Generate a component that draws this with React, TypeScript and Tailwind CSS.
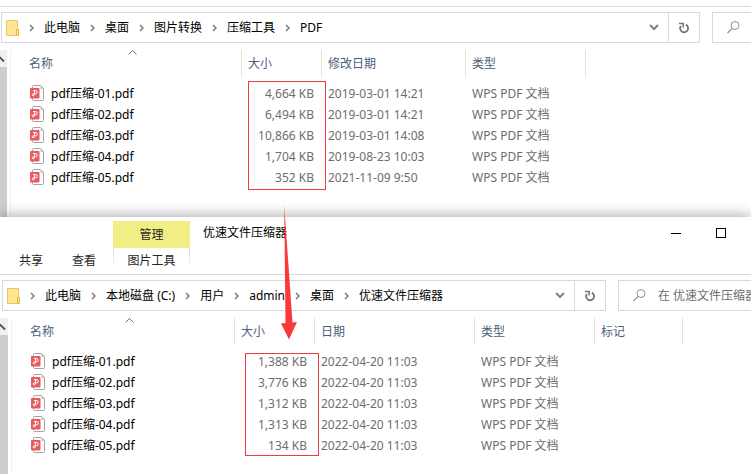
import { clsx } from "clsx";

type Column = { label: string; width: string };
type FileRow = { name: string; size: string; date: string };

const SOURCE_COLUMNS: Column[] = [
  { label: "名称", width: "w-[219px]" },
  { label: "大小", width: "w-[80px]" },
  { label: "修改日期", width: "w-[144px]" },
  { label: "类型", width: "w-[120px]" },
];

const OUTPUT_COLUMNS: Column[] = [
  { label: "名称", width: "w-[211px]" },
  { label: "大小", width: "w-[80px]" },
  { label: "日期", width: "w-[160px]" },
  { label: "类型", width: "w-[120px]" },
  { label: "标记", width: "w-[88px]" },
];

const SOURCE_FILES: FileRow[] = [
  { name: "pdf压缩-01.pdf", size: "4,664 KB", date: "2019-03-01 14:21" },
  { name: "pdf压缩-02.pdf", size: "6,494 KB", date: "2019-03-01 14:21" },
  { name: "pdf压缩-03.pdf", size: "10,866 KB", date: "2019-03-01 14:08" },
  { name: "pdf压缩-04.pdf", size: "1,704 KB", date: "2019-08-23 10:03" },
  { name: "pdf压缩-05.pdf", size: "352 KB", date: "2021-11-09 9:50" },
];

const OUTPUT_FILES: FileRow[] = [
  { name: "pdf压缩-01.pdf", size: "1,388 KB", date: "2022-04-20 11:03" },
  { name: "pdf压缩-02.pdf", size: "3,776 KB", date: "2022-04-20 11:03" },
  { name: "pdf压缩-03.pdf", size: "1,312 KB", date: "2022-04-20 11:03" },
  { name: "pdf压缩-04.pdf", size: "1,313 KB", date: "2022-04-20 11:03" },
  { name: "pdf压缩-05.pdf", size: "134 KB", date: "2022-04-20 11:03" },
];

function FolderIcon() {
  return (
    <svg width="13" height="16" viewBox="0 0 13 16" className="shrink-0">
      <path d="M.5.5h11v15H.5z" fill="#ffe594" stroke="#ecc85c" />
      <path d="M10.5 9.5h2v6h-2z" fill="#ffe594" stroke="#e9b93a" />
    </svg>
  );
}

function CrumbArrow() {
  return (
    <svg width="5" height="8" viewBox="0 0 5 8" className="shrink-0">
      <path d="M1 1l3 3-3 3" fill="none" stroke="#7a7a7a" strokeWidth="1.5" />
    </svg>
  );
}

function PdfIcon() {
  return (
    <svg width="16" height="17" viewBox="0 0 16 17" className="shrink-0">
      <path
        d="M4.5.5h7l3 3v11a1 1 0 0 1-1 1h-9a1 1 0 0 1-1-1v-13a1 1 0 0 1 1-1z"
        fill="#fff"
        stroke="#a3a3a3"
      />
      <path d="M11.5 1l3 3h-3z" fill="#c4c4c4" />
      <rect x="1" y="3" width="9.5" height="10.5" rx="1" fill="#ea5a5e" />
      <path
        d="M4 5.5h2.500a1.700 1.700 0 0 1 0 3.400H4.200a1 1 0 1 0 1 1.100l.6-4.500"
        fill="none"
        stroke="#fff"
      />
    </svg>
  );
}

function RefreshIcon() {
  return (
    <svg width="12" height="12" viewBox="0 0 12 12">
      <path d="M7.8 2.6a4 4 0 1 1-5 1.400" fill="none" stroke="#757575" strokeWidth="1.8" />
      <path d="M1 1.500h4.200v4" fill="none" stroke="#757575" strokeWidth="1.5" />
    </svg>
  );
}

function SearchIcon() {
  return (
    <svg width="13" height="13" viewBox="0 0 13 13" className="shrink-0">
      <circle cx="8" cy="4.5" r="4" fill="none" stroke="#8f8f8f" />
      <path d="M5.2 7.3L.5 12" stroke="#8f8f8f" strokeWidth="1.2" />
    </svg>
  );
}

function AddressRow({
  crumbs,
  search,
  searchWidth,
}: {
  crumbs: string[];
  search: string;
  searchWidth: string;
}) {
  return (
    <div className="mt-[5px] flex h-[31px] gap-3 pl-0.5">
      <div className="flex min-w-0 flex-1 border border-[#d9d9d9]">
        <nav className="flex min-w-0 flex-1 items-center gap-2.5 pl-1">
          <FolderIcon />
          {crumbs.map((crumb) => (
            <span key={crumb} className="flex items-center gap-2.5">
              <CrumbArrow />
              <button className="whitespace-nowrap">{crumb}</button>
            </span>
          ))}
        </nav>
        <button aria-label="历史记录" className="grid w-7 place-items-center">
          <svg width="10" height="7" viewBox="0 0 10 7">
            <path d="M1 1l4 4 4-4" fill="none" stroke="#808080" strokeWidth="2" />
          </svg>
        </button>
        <button
          aria-label="刷新"
          className="grid w-[31px] place-items-center border-l border-[#d9d9d9]"
        >
          <RefreshIcon />
        </button>
      </div>
      <label
        className={clsx(
          "flex shrink-0 items-center gap-3 overflow-hidden border border-r-0 border-[#d9d9d9] pl-3.5",
          searchWidth,
        )}
      >
        <SearchIcon />
        <input
          aria-label="搜索"
          placeholder={search}
          className="w-full min-w-0 outline-none placeholder:text-[#6d6d6d]"
        />
      </label>
    </div>
  );
}

function ScrollBar() {
  return (
    <div className="flex w-2 shrink-0 flex-col bg-[#cdcdcd]">
      <button aria-label="向上滚动" className="h-[17px] bg-[#f0f0f0]">
        <svg width="8" height="17" viewBox="0 0 8 17">
          <path d="M-4 11.5L.5 7 5 11.5" fill="none" stroke="#505050" strokeWidth="1.8" />
        </svg>
      </button>
    </div>
  );
}

function FileTable({ columns, files }: { columns: Column[]; files: FileRow[] }) {
  return (
    <table className="table-fixed border-collapse self-start">
      <thead>
        <tr className="h-[33px] align-top text-[#4c607a]">
          {columns.map((column, index) => (
            <th key={column.label} className={clsx("p-0 text-left font-normal", column.width)}>
              <div className="relative flex h-[27px] items-center border-r border-[#e2e2e2] pl-1.5">
                {column.label}
                {index === 0 && (
                  <svg
                    width="9"
                    height="5"
                    viewBox="0 0 9 5"
                    className="absolute inset-x-0 top-0 mx-auto"
                  >
                    <path d="M.5 4.5l4-4 4 4" fill="none" stroke="#6d6d6d" />
                  </svg>
                )}
              </div>
            </th>
          ))}
        </tr>
      </thead>
      <tbody className="text-[#6d6d6d]">
        {files.map((file) => (
          <tr key={file.name} className="h-[21px]">
            <td className="p-0 pl-1.5 text-black">
              <div className="flex items-center gap-1.5">
                <PdfIcon />
                {file.name}
              </div>
            </td>
            <td className="p-0 pr-2 text-right">{file.size}</td>
            <td className="p-0 pl-1.5">{file.date}</td>
            <td className="p-0 pl-1.5">WPS PDF 文档</td>
          </tr>
        ))}
      </tbody>
    </table>
  );
}

function FilePane({ columns, files }: { columns: Column[]; files: FileRow[] }) {
  return (
    <div className="mt-[7px] flex flex-1">
      <ScrollBar />
      <div className="ml-[3px] flex border-l border-[#f0f0f0] pl-3">
        <FileTable columns={columns} files={files} />
      </div>
    </div>
  );
}

function Ribbon() {
  return (
    <header className="flex h-[58px] border-b border-[#d9d9d9]">
      <button className="mt-[31px] h-[26px] w-[62px] text-[#262626]">共享</button>
      <button className="mt-[31px] h-[26px] w-11 text-[#262626]">查看</button>
      <div className="ml-[7px] mt-1 w-[77px] text-[#262626]">
        <div className="grid h-[27px] place-items-center bg-[#f0ee84]">管理</div>
        <div className="flex">
          <span className="h-[22px] w-px bg-gradient-to-b from-gray-300 to-transparent" />
          <button className="h-[26px] flex-1">图片工具</button>
          <span className="h-[22px] w-px bg-gradient-to-b from-gray-300 to-transparent" />
        </div>
      </div>
      <h1 className="ml-[13px] flex h-8 items-center">优速文件压缩器</h1>
      <div className="ml-auto flex h-[31px] items-center gap-[35px] pr-[25px]">
        <button aria-label="最小化">
          <svg width="10" height="10" viewBox="0 0 10 10" className="block">
            <path d="M0 5.5h10" stroke="#000" />
          </svg>
        </button>
        <button aria-label="最大化" className="size-2.5 border border-black" />
      </div>
    </header>
  );
}

export default function App() {
  return (
    <div className="relative flex min-h-screen flex-col overflow-hidden bg-white font-['Noto_Sans','Noto_Sans_CJK_SC',sans-serif] text-xs text-black">
      <section className="relative -ml-px flex min-h-[217px] flex-col">
        <div className="h-[7px] border-b border-[#d9d9d9]" />
        <AddressRow
          crumbs={["此电脑", "桌面", "图片转换", "压缩工具", "PDF"]}
          search=""
          searchWidth="w-[39px]"
        />
        <FilePane columns={SOURCE_COLUMNS} files={SOURCE_FILES} />
        <div className="pointer-events-none absolute left-[249px] top-[81px] h-[109px] w-[78px] border border-[#f03c3c]" />
      </section>

      <section className="relative flex flex-1 flex-col bg-white shadow-[0_0_14px_rgba(0,0,0,0.4)]">
        <Ribbon />
        <AddressRow
          crumbs={["此电脑", "本地磁盘 (C:)", "用户", "admin", "桌面", "优速文件压缩器"]}
          search="在 优速文件压缩器 中搜索"
          searchWidth="w-[133px]"
        />
        <FilePane columns={OUTPUT_COLUMNS} files={OUTPUT_FILES} />
        <div className="pointer-events-none absolute left-[245px] top-[136px] h-[103px] w-[74px] border border-[#f03c3c]" />
      </section>

      {/* arrow from the original sizes to the compressed ones */}
      <svg
        width="16"
        height="135"
        viewBox="0 0 16 135"
        className="pointer-events-none absolute left-[281px] top-[205px]"
      >
        <path d="M3.2 0L11.5 117.5 16 117 8 134.5 0 118.5 4.5 118z" fill="#fd3838" />
      </svg>
    </div>
  );
}
